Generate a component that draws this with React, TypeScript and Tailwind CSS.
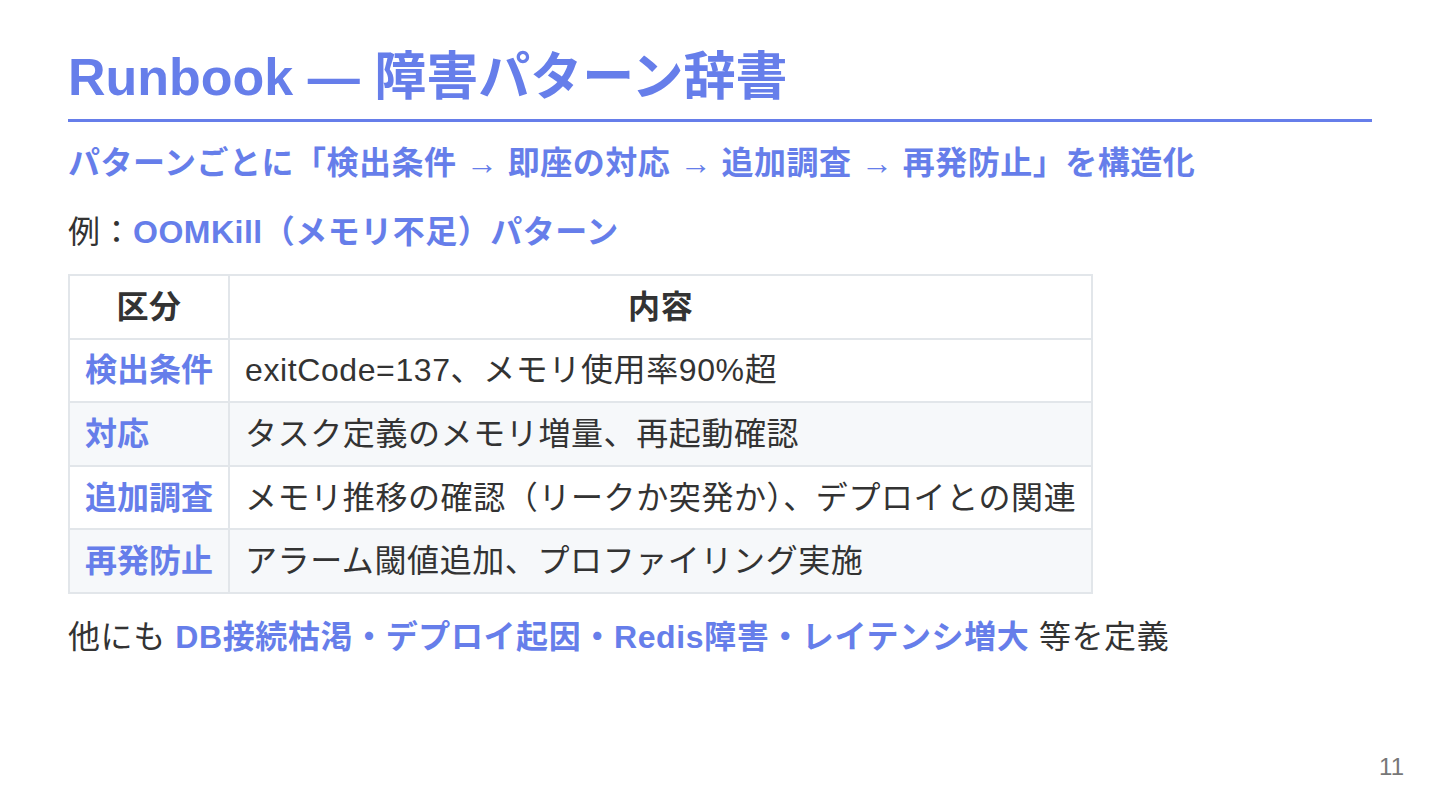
import React from "react";

const font = { fontFamily: '"Liberation Sans", "Noto Sans CJK JP", sans-serif' };

const rows: [string, string][] = [
  ["検出条件", "exitCode=137、メモリ使用率90%超"],
  ["対応", "タスク定義のメモリ増量、再起動確認"],
  ["追加調査", "メモリ推移の確認（リークか突発か）、デプロイとの関連"],
  ["再発防止", "アラーム閾値追加、プロファイリング実施"],
];

export default function App() {
  return (
    <div className="w-[1440px] h-[810px] bg-white relative overflow-hidden text-[#333]" style={font}>
      <div className="pl-[68px] pr-[68px] pt-[42px]">
        <h1 className="text-[52px] leading-[70px] font-bold text-[#667eea] pb-[7px] border-b-[3px] border-[#667eea]">
          Runbook — 障害パターン辞書
        </h1>
        <p className="mt-[17px] text-[32px] leading-[48px] font-bold text-[#667eea] tracking-[0.5px]">
          パターンごとに「検出条件 → 即座の対応 → 追加調査 → 再発防止」を構造化
        </p>
        <p className="mt-[21px] text-[32px] leading-[48px] tracking-[0.5px]">
          例：<span className="font-bold text-[#667eea]">OOMKill（メモリ不足）パターン</span>
        </p>
        <table className="mt-[18px] border-collapse text-[32px] leading-[48px] tracking-[0.6px]">
          <thead>
            <tr className="bg-white">
              <th className="border-2 border-[#e2e6ea] px-[16px] py-[6.8px] font-bold text-center">区分</th>
              <th className="border-2 border-[#e2e6ea] px-[16px] py-[6.8px] font-bold text-center">内容</th>
            </tr>
          </thead>
          <tbody>
            {rows.map(([k, v], i) => (
              <tr key={k} className={i % 2 === 1 ? "bg-[#f6f8fa]" : "bg-white"}>
                <td className="border-2 border-[#e2e6ea] px-[15px] py-[6.8px] font-bold text-[#667eea] text-left tracking-[0px]">{k}</td>
                <td className="border-2 border-[#e2e6ea] px-[15px] py-[6.8px] text-left">{v}</td>
              </tr>
            ))}
          </tbody>
        </table>
        <p className="mt-[19px] text-[32px] leading-[48px] tracking-[0.6px]">
          他にも <span className="font-bold text-[#667eea]">DB接続枯渇・デプロイ起因・Redis障害・レイテンシ増大</span> 等を定義
        </p>
      </div>
      <div className="absolute right-[36px] top-[752px] text-[24px] leading-[30px] text-[#777]">11</div>
    </div>
  );
}
